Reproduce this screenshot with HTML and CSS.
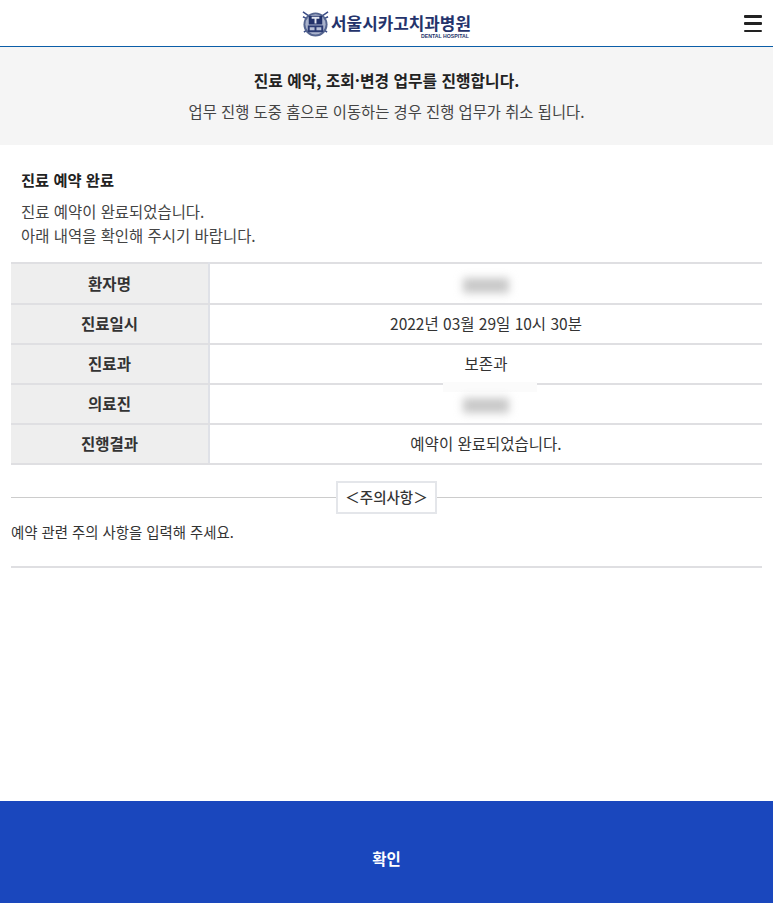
FILE: index.html
```html
<!DOCTYPE html>
<html lang="ko">
<head>
  <meta charset="UTF-8" />
  <meta name="viewport" content="width=device-width, initial-scale=1" />
  <title>진료 예약 완료</title>
  <link rel="stylesheet" href="styles.css">
</head>
<body>

  <header class="top-bar">
    <a class="logo" href="#">
      <svg class="logo-mark" viewBox="0 0 28 28" aria-hidden="true">
        <path d="M1 2 L7 6 M27 2 L21 6 M1 7 L5 9 M27 7 L23 9 M2 23 L6 20 M26 23 L22 20" stroke="#3a4c86" stroke-width="1.6" fill="none" />
        <circle cx="14" cy="15" r="12.5" fill="#55658f" />
        <circle cx="14" cy="15" r="10.5" fill="#a9b2cb" />
        <path d="M7 6 h14 v9 h-14 z" fill="#22326a" />
        <path d="M10 7 h8 v2 h-3 v5 h-2 v-5 h-3 z" fill="#e4e7f0" />
        <path d="M6 16 h16 v7 h-16 z" fill="#2b3b73" />
        <path d="M8 18 h5 v3 h-5 z M15 18 h5 v3 h-5 z" fill="#b9c1d6" />
      </svg>
      <span class="logo-text">
        <span class="logo-name">서울시카고치과병원</span>
        <span class="logo-sub">DENTAL HOSPITAL</span>
      </span>
    </a>
    <button class="menu-btn" type="button" aria-label="메뉴">
      <span></span><span></span><span></span>
    </button>
  </header>

  <section class="notice">
    <p class="notice-title">진료 예약, 조회·변경 업무를 진행합니다.</p>
    <p class="notice-desc">업무 진행 도중 홈으로 이동하는 경우 진행 업무가 취소 됩니다.</p>
  </section>

  <main class="content">
    <div class="intro">
      <h2>진료 예약 완료</h2>
      <p>진료 예약이 완료되었습니다.<br>아래 내역을 확인해 주시기 바랍니다.</p>
    </div>

    <table class="result-table">
      <tr>
        <th>환자명</th>
        <td><span class="masked"></span></td>
      </tr>
      <tr>
        <th>진료일시</th>
        <td>2022년 03월 29일 10시 30분</td>
      </tr>
      <tr>
        <th>진료과</th>
        <td>보존과</td>
      </tr>
      <tr>
        <th>의료진</th>
        <td><span class="masked masked-halo"></span></td>
      </tr>
      <tr>
        <th>진행결과</th>
        <td>예약이 완료되었습니다.</td>
      </tr>
    </table>

    <div class="caution-head"><span>＜주의사항＞</span></div>
    <p class="caution-text">예약 관련 주의 사항을 입력해 주세요.</p>
  </main>

  <button class="confirm-btn" type="button">확인</button>

</body>
</html>
```

FILE: styles.css
```css
* {
  box-sizing: border-box;
}

body {
  margin: 0;
  min-height: 100vh;
  display: flex;
  flex-direction: column;
  font-family: 'Noto Sans CJK KR', 'Noto Sans', sans-serif;
  font-size: 15.4px;
  color: #333;
  background: white;
}

p, h2 {
  margin: 0;
}

.top-bar {
  position: relative;
  height: 47px;
  display: flex;
  align-items: center;
  justify-content: center;
  border-bottom: 1px solid #0b5ea8;
}

.logo {
  display: flex;
  align-items: center;
  gap: 2px;
  color: #24336b;
  text-decoration: none;
}

.logo-mark {
  width: 27px;
  height: 27px;
}

.logo-text {
  display: flex;
  flex-direction: column;
  align-items: flex-end;
  margin-top: 5px;
}

.logo-name {
  font-size: 16.9px;
  font-weight: 700;
  line-height: 20px;
}

.logo-sub {
  font-family: 'Liberation Sans', sans-serif;
  font-size: 5.2px;
  font-weight: 700;
  line-height: 6px;
  margin-right: 2px;
}

.menu-btn {
  position: absolute;
  right: 11px;
  top: 15px;
  width: 18px;
  height: 17px;
  padding: 0;
  border: none;
  background: none;
  display: flex;
  flex-direction: column;
  justify-content: space-between;
}

.menu-btn span {
  display: block;
  height: 2.5px;
  border-radius: 1px;
  background: #222;
}

.notice {
  height: 98px;
  padding-top: 22px;
  background: #f5f5f5;
  text-align: center;
}

.notice-title {
  font-size: 15.8px;
  font-weight: 700;
  line-height: 24px;
  color: #222;
}

.notice-desc {
  margin-top: 6px;
  font-size: 15.35px;
  line-height: 24px;
  color: #444;
}

.content {
  padding: 0 11px;
}

.intro {
  padding: 22px 10px 15px;
}

.intro h2 {
  font-size: 15.3px;
  font-weight: 700;
  line-height: 24px;
  color: #222;
}

.intro p {
  margin-top: 9px;
  font-size: 15.45px;
  line-height: 23.5px;
  color: #444;
}

.result-table {
  width: 100%;
  border-collapse: collapse;
  border-top: 2px solid #dfdfe2;
  table-layout: fixed;
}

.result-table th,
.result-table td {
  height: 40px;
  padding: 0 0 2px;
  border-bottom: 2px solid #dfdfe2;
  text-align: center;
  font-size: 15.5px;
}

.result-table tr:first-child th,
.result-table tr:first-child td {
  height: 41px;
}

.result-table th {
  width: 198px;
  border-right: 2px solid #dfe1e7;
  background: #eee;
  font-weight: 700;
  color: #333;
}

.result-table td {
  color: #333;
}

/* blurred out personal data */
.masked {
  position: relative;
  display: inline-block;
  width: 46px;
  height: 15px;
  vertical-align: middle;
}

.masked::after {
  content: "";
  display: block;
  height: 100%;
  background: #c8c8c8;
  filter: blur(4px);
}

/* the blur left a pale box over the row line above */
.masked-halo::before {
  content: "";
  position: absolute;
  left: -20px;
  right: -28px;
  top: -16px;
  height: 10px;
  background: #fbfbfb;
}

.caution-head {
  display: flex;
  align-items: center;
  justify-content: center;
  margin-top: 16px;
  background: linear-gradient(#ccc, #ccc) center / 100% 1px no-repeat;
}

.caution-head span {
  width: 101px;
  height: 33px;
  border: 2px solid #e4e6ea;
  background: white;
  text-align: center;
  font-size: 14.5px;
  font-weight: 500;
  line-height: 27px;
  color: #333;
  white-space: nowrap;
}

.caution-text {
  height: 54px;
  padding-top: 6px;
  border-bottom: 2px solid #dfdfe2;
  font-size: 14.4px;
  line-height: 24px;
  color: #333;
}

.confirm-btn {
  margin-top: auto;
  height: 102px;
  padding: 12px 0 0;
  border: none;
  background: #1a47bd;
  color: white;
  font-family: inherit;
  font-size: 15.5px;
  font-weight: 700;
}
```
